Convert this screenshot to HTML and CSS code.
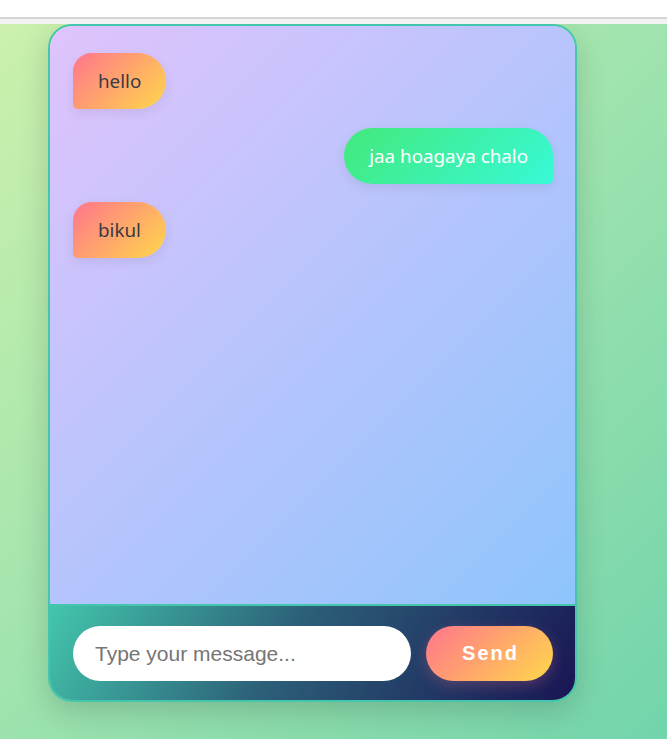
FILE: index.html
```html
<!DOCTYPE html>
<html lang="en">
<head>
<meta charset="utf-8">
<title>Chat</title>
<link rel="stylesheet" href="styles.css">
</head>
<body>
<div class="chrome"></div>
<main class="page">
  <section class="chat">
    <div class="messages">
      <div class="msg msg-in">hello</div>
      <div class="msg msg-out">jaa hoagaya chalo</div>
      <div class="msg msg-in">bikul</div>
    </div>
    <form class="composer" onsubmit="return false">
      <input class="composer-input" type="text" placeholder="Type your message...">
      <button class="composer-send" type="submit">Send</button>
    </form>
  </section>
</main>
</body>
</html>
```

FILE: styles.css
```css
html, body {
  margin: 0;
  padding: 0;
}
body {
  height: 739px;
  overflow: hidden;
  background: linear-gradient(135deg, #cdf1ac 0%, #9fe3ae 50%, #72d4ab 100%);
  font-family: "Noto Sans", "Open Sans", sans-serif;
}
.chrome {
  height: 17px;
  background: #ffffff;
  border-bottom: 2px solid #d6d6d6;
  position: relative;
}
.chrome::after {
  content: "";
  display: block;
  position: absolute;
  left: 0;
  right: 0;
  top: 19px;
  height: 5px;
  background: #f3f3f3;
}
.page {
  padding-top: 5px;
  padding-left: 48px;
}
.chat {
  width: 529px;
  height: 678px;
  box-sizing: border-box;
  border: 2px solid #43c6ac;
  border-radius: 24px;
  overflow: hidden;
  display: flex;
  flex-direction: column;
  box-shadow: 0 10px 30px rgba(0, 0, 0, 0.16);
}
.messages {
  flex: 1;
  background: linear-gradient(135deg, #e0c3fc 0%, #8ec5fc 100%);
  padding: 27px 22px 0 23px;
  display: flex;
  flex-direction: column;
  align-items: flex-start;
  gap: 18.5px;
}
.msg {
  font-size: 18.8px;
  line-height: 26px;
  padding: 15px 25px;
  box-shadow: 0 4px 12px rgba(0, 0, 0, 0.07);
}
.msg-in {
  color: #383a45;
  background: linear-gradient(135deg, #ff758c 0%, #ffd84a 100%);
  border-radius: 20px 30px 30px 5px;
}
.msg-out {
  align-self: flex-end;
  color: #ffffff;
  background: linear-gradient(135deg, #43e97b 0%, #38f9d7 100%);
  border-radius: 30px 30px 5px 30px;
}
.composer {
  margin: 0;
  height: 96px;
  flex: none;
  box-sizing: border-box;
  border-top: 2px solid #43c6ac;
  background: linear-gradient(120deg, #43c6ac 0%, #2c5f78 45%, #191654 100%);
  padding: 20px 22px 0 23px;
  display: flex;
  gap: 15px;
  align-items: flex-start;
}
.composer-input {
  flex: 1;
  height: 55px;
  box-sizing: border-box;
  border: none;
  outline: none;
  border-radius: 28px;
  background: #ffffff;
  padding: 0 22px;
  font-family: "Liberation Sans", Arial, sans-serif;
  font-size: 21px;
  color: #333;
}
.composer-input::placeholder {
  color: #757575;
}
.composer-send {
  width: 127px;
  height: 55px;
  border: none;
  border-radius: 28px;
  background: linear-gradient(135deg, #ff758c 0%, #ffd84a 100%);
  color: #ffffff;
  font-family: "Liberation Sans", Arial, sans-serif;
  font-weight: bold;
  font-size: 20px;
  letter-spacing: 2px;
  padding: 0 0 0 2px;
  box-shadow: 0 4px 14px rgba(255, 117, 140, 0.25);
}
```
